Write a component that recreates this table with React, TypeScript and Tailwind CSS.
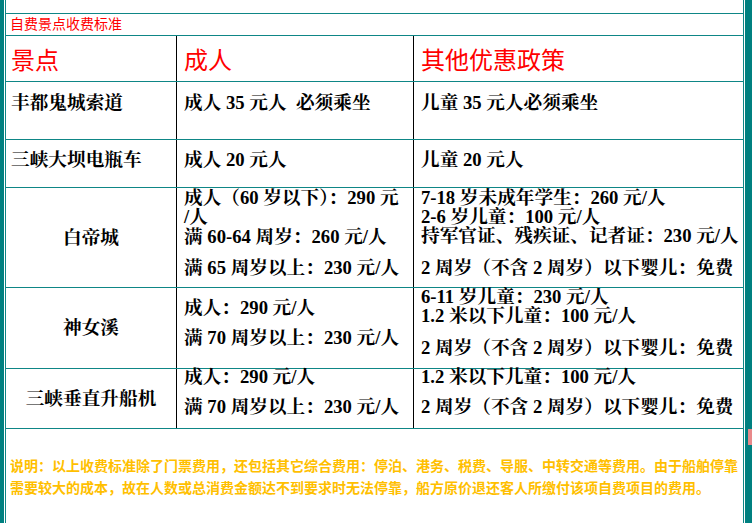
const teal = 'border-[#0e8686]';

function Cell({ className = '', children }: { className?: string; children?: React.ReactNode }) {
  return <div className={className}>{children}</div>;
}

export default function App() {
  const dataFont = "[font-family:'Liberation_Serif','Noto_Serif_CJK_SC','Noto_Sans_CJK_SC',serif]";
  const row = `flex border-b ${teal}`;
  const c1 = 'w-[171px] shrink-0 border-r border-black';
  const c2 = 'w-[237px] shrink-0 border-r border-black pl-[7px]';
  const c3 = 'flex-1 pl-[7px]';

  return (
    <div className="flex h-[523px] w-[752px] overflow-hidden bg-white">
      <div className="w-[4px] shrink-0 bg-[#008080]" />
      <div className={`ml-[1px] flex w-[739px] shrink-0 flex-col border-x ${teal}`}>
        {/* empty top row */}
        <div className={`h-[14px] border-b ${teal}`} />

        {/* title */}
        <div className={`h-[22px] border-b ${teal} pl-[4px] text-[14px] leading-[18px] text-[#ff0000] [font-family:'Noto_Sans_CJK_SC',sans-serif]`}>
          自费景点收费标准
        </div>

        {/* header */}
        <div className={`${row} h-[46px] text-[24px] leading-[30px] text-[#ff0000] [font-family:'Noto_Sans_CJK_SC',sans-serif]`}>
          <Cell className={`${c1} flex items-center pl-[5px]`}>景点</Cell>
          <Cell className={`${c2} flex items-center`}>成人</Cell>
          <Cell className={`${c3} flex items-center`}>其他优惠政策</Cell>
        </div>

        <div className={`${dataFont} text-[18.67px] font-bold text-black whitespace-pre`}>
          {/* 丰都鬼城索道 */}
          <div className={`${row} h-[58px] leading-[20px]`}>
            <Cell className={`${c1} pl-[5px] pt-[11px]`}>丰都鬼城索道</Cell>
            <Cell className={`${c2} pt-[11px]`}>成人 35 元人  必须乘坐</Cell>
            <Cell className={`${c3} pt-[11px]`}>儿童 35 元人必须乘坐</Cell>
          </div>

          {/* 三峡大坝电瓶车 */}
          <div className={`${row} h-[48px] leading-[20px]`}>
            <Cell className={`${c1} pl-[5px] pt-[10px]`}>三峡大坝电瓶车</Cell>
            <Cell className={`${c2} pt-[10px]`}>成人 20 元人</Cell>
            <Cell className={`${c3} pt-[10px]`}>儿童 20 元人</Cell>
          </div>

          {/* 白帝城 */}
          <div className={`${row} h-[100px]`}>
            <Cell className={`${c1} flex items-center justify-center leading-[20px]`}>白帝城</Cell>
            <Cell className={`${c2} leading-[19px]`}>
              <p>
                成人（60 岁以下）：290 元
                <br />
                /人
              </p>
              <p className="mt-[1px]">满 60-64 周岁：260 元/人</p>
              <p className="mt-[12px]">满 65 周岁以上：230 元/人</p>
            </Cell>
            <Cell className={`${c3} leading-[19px]`}>
              <p>7-18 岁未成年学生：260 元/人</p>
              <p>2-6 岁儿童：100 元/人</p>
              <p>持军官证、残疾证、记者证：230 元/人</p>
              <p className="mt-[13px]">2 周岁（不含 2 周岁）以下婴儿：免费</p>
            </Cell>
          </div>

          {/* 神女溪 */}
          <div className={`${row} h-[81px]`}>
            <Cell className={`${c1} flex items-center justify-center leading-[20px]`}>神女溪</Cell>
            <Cell className={`${c2} pt-[10px] leading-[20px]`}>
              <p>成人：290 元/人</p>
              <p className="mt-[10px]">满 70 周岁以上：230 元/人</p>
            </Cell>
            <Cell className={`${c3} leading-[19px]`}>
              <p className="-mt-[1px]">6-11 岁儿童：230 元/人</p>
              <p>1.2 米以下儿童：100 元/人</p>
              <p className="mt-[13px]">2 周岁（不含 2 周岁）以下婴儿：免费</p>
            </Cell>
          </div>

          {/* 三峡垂直升船机 */}
          <div className={`${row} h-[60px]`}>
            <Cell className={`${c1} flex items-center justify-center leading-[20px]`}>三峡垂直升船机</Cell>
            <Cell className={`${c2} leading-[20px]`}>
              <p className="-mt-[2px]">成人：290 元/人</p>
              <p className="mt-[10px]">满 70 周岁以上：230 元/人</p>
            </Cell>
            <Cell className={`${c3} leading-[20px]`}>
              <p className="-mt-[2px]">1.2 米以下儿童：100 元/人</p>
              <p className="mt-[10px]">2 周岁（不含 2 周岁）以下婴儿：免费</p>
            </Cell>
          </div>
        </div>

        {/* note */}
        <div className="flex-1 pl-[4px] pt-[25px] text-[14px] font-bold leading-[22px] text-[#ffbf00] whitespace-nowrap [font-family:'Noto_Sans_CJK_SC',sans-serif]">
          说明：以上收费标准除了门票费用，还包括其它综合费用：停泊、港务、税费、导服、中转交通等费用。由于船舶停靠
          <br />
          需要较大的成本，故在人数或总消费金额达不到要求时无法停靠，船方原价退还客人所缴付该项自费项目的费用。
        </div>
      </div>
      <div className="relative ml-[1px] w-[7px] shrink-0 bg-[#008080]">
        <div className="absolute left-[3px] top-[429px] h-[16px] w-[4px] bg-[#e8898a]" />
      </div>
    </div>
  );
}
